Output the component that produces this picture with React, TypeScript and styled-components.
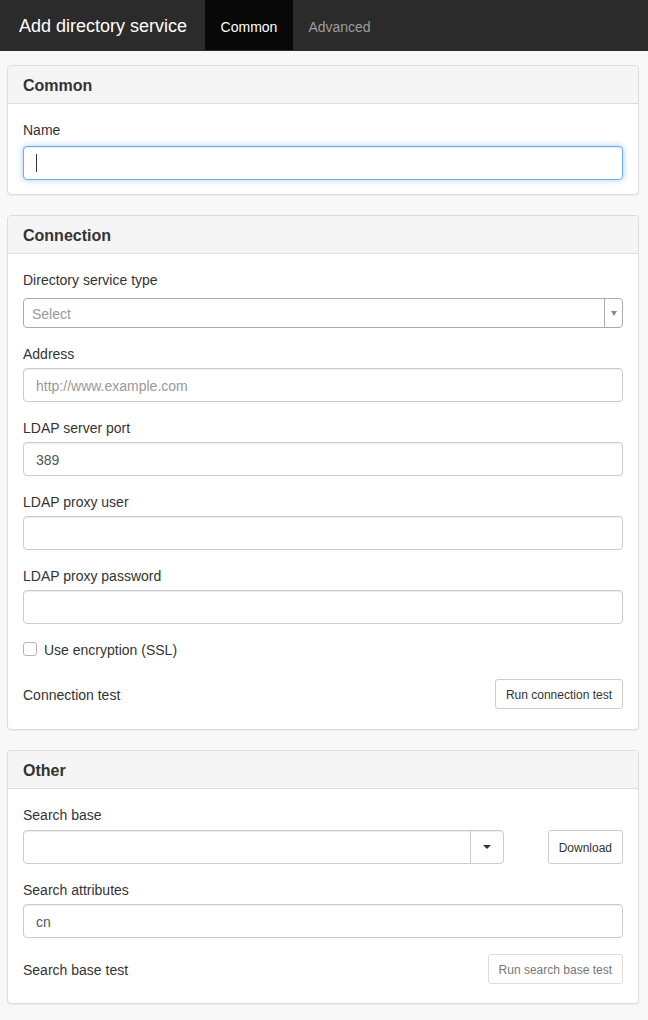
import styled, { createGlobalStyle } from 'styled-components';

const GlobalStyle = createGlobalStyle`
  * { box-sizing: border-box; }
  body {
    margin: 0;
    background: #f8f8f8;
    font-family: "Liberation Sans", Arial, sans-serif;
    font-size: 14px;
    color: #333;
  }
`;

const Navbar = styled.div`
  display: flex;
  align-items: flex-start;
  height: 51px;
  background: #2b2b2b;
`;

const Brand = styled.div`
  display: flex;
  align-items: center;
  height: 50px;
  padding: 3px 18px 0 19px;
  color: #fff;
  font-size: 18px;
`;

const Tab = styled.div<{ $active?: boolean }>`
  display: flex;
  align-items: center;
  height: 50px;
  padding: 3px 15.5px 0;
  font-size: 14px;
  color: ${(p) => (p.$active ? '#fff' : '#9d9d9d')};
  background: ${(p) => (p.$active ? '#080808' : 'transparent')};
`;

const Page = styled.div`
  padding: 14px 9px 16px 7px;
  display: flex;
  flex-direction: column;
  gap: 20px;
`;

const Panel = styled.div`
  background: #fff;
  border: 1px solid #ddd;
  border-radius: 4px;
  box-shadow: 0 1px 1px rgba(0, 0, 0, 0.05);
`;

const PanelHeading = styled.div`
  height: 38px;
  display: flex;
  align-items: center;
  padding: 2px 15px 0;
  background: #f5f5f5;
  border-bottom: 1px solid #ddd;
  border-radius: 3px 3px 0 0;
  font-size: 16px;
  font-weight: bold;
  color: #333;
`;

const PanelBody = styled.div<{ $bottom?: number }>`
  padding: 15px 15px ${(p) => p.$bottom ?? 15}px;
  display: flex;
  flex-direction: column;
`;

const FormGroup = styled.div<{ $gap?: number }>`
  display: flex;
  flex-direction: column;
  margin-bottom: ${(p) => p.$gap ?? 15}px;
`;

const Label = styled.label<{ $mb?: number }>`
  line-height: 20px;
  padding-top: 1px;
  margin-bottom: ${(p) => (p.$mb ?? 5) - 1}px;
  color: #333;
`;

const Input = styled.input<{ $focus?: boolean }>`
  height: 34px;
  width: 100%;
  padding: 7px 12px 5px;
  font-family: inherit;
  font-size: 14px;
  color: #555;
  border: 1px solid ${(p) => (p.$focus ? '#66afe9' : '#ccc')};
  border-radius: 4px;
  box-shadow: ${(p) =>
    p.$focus
      ? 'inset 0 1px 1px rgba(0,0,0,.075), 0 0 6px rgba(102,175,233,.6)'
      : 'inset 0 1px 1px rgba(0,0,0,.075)'};
  outline: none;
  &::placeholder { color: #999; }
`;

const SelectBox = styled.div`
  height: 30px;
  display: flex;
  border: 1px solid #aaa;
  border-radius: 4px;
  background: #fff;
`;

const SelectText = styled.div`
  flex: 1;
  display: flex;
  align-items: center;
  padding: 2px 8px 0;
  color: #999;
`;

const SelectArrow = styled.div`
  width: 18px;
  border-left: 1px solid #aaa;
  display: flex;
  align-items: center;
  justify-content: center;
  &::after {
    content: '';
    border-left: 3px solid transparent;
    border-right: 3px solid transparent;
    border-top: 5px solid #888;
  }
`;

const Combo = styled.div`
  flex: 1;
  display: flex;
  height: 34px;
  border: 1px solid #ccc;
  border-radius: 4px;
  box-shadow: inset 0 1px 1px rgba(0,0,0,.075);
`;

const ComboField = styled.div`
  flex: 1;
`;

const ComboCaret = styled.div`
  width: 33px;
  border-left: 1px solid #ccc;
  display: flex;
  align-items: center;
  justify-content: center;
  &::after {
    content: '';
    border-left: 4px solid transparent;
    border-right: 4px solid transparent;
    border-top: 4px solid #333;
  }
`;

const InlineRow = styled.div`
  display: flex;
  align-items: center;
  gap: 44px;
`;

const CheckRow = styled.label`
  display: flex;
  align-items: center;
  gap: 7px;
  height: 20px;
  margin-bottom: 20px;
`;

const CheckBox = styled.span`
  width: 14px;
  height: 14px;
  border: 1px solid #b5b5b5;
  border-radius: 3px;
  background: #fff;
`;

const ActionRow = styled.div`
  display: flex;
  align-items: center;
  justify-content: space-between;
`;

const RowText = styled.span`
  padding-top: 2px;
`;

const Button = styled.button<{ $size?: 'sm' | 'md'; $disabled?: boolean }>`
  height: ${(p) => (p.$size === 'sm' ? 30 : 34)}px;
  padding: 2px 10px 0;
  font-family: inherit;
  font-size: 12px;
  color: ${(p) => (p.$disabled ? '#777' : '#333')};
  background: #fff;
  border: 1px solid ${(p) => (p.$disabled ? '#ddd' : '#ccc')};
  border-radius: 3px;
`;

const FocusWrap = styled.div`
  position: relative;
`;

const Cursor = styled.span`
  position: absolute;
  left: 13px;
  top: 8px;
  width: 1px;
  height: 18px;
  background: #333;
`;

export default function App() {
  return (
    <>
      <GlobalStyle />
      <Navbar>
        <Brand>Add directory service</Brand>
        <Tab $active>Common</Tab>
        <Tab>Advanced</Tab>
      </Navbar>
      <Page>
        <Panel>
          <PanelHeading>Common</PanelHeading>
          <PanelBody $bottom={14}>
            <FormGroup $gap={0}>
              <Label $mb={7}>Name</Label>
              <FocusWrap>
                <Input $focus />
                <Cursor />
              </FocusWrap>
            </FormGroup>
          </PanelBody>
        </Panel>

        <Panel>
          <PanelHeading>Connection</PanelHeading>
          <PanelBody $bottom={20}>
            <FormGroup>
              <Label $mb={9}>Directory service type</Label>
              <SelectBox>
                <SelectText>Select</SelectText>
                <SelectArrow />
              </SelectBox>
            </FormGroup>
            <FormGroup>
              <Label>Address</Label>
              <Input placeholder="http://www.example.com" />
            </FormGroup>
            <FormGroup>
              <Label>LDAP server port</Label>
              <Input defaultValue="389" />
            </FormGroup>
            <FormGroup>
              <Label>LDAP proxy user</Label>
              <Input />
            </FormGroup>
            <FormGroup>
              <Label>LDAP proxy password</Label>
              <Input type="password" />
            </FormGroup>
            <CheckRow>
              <CheckBox />
              <RowText>Use encryption (SSL)</RowText>
            </CheckRow>
            <ActionRow>
              <RowText>Connection test</RowText>
              <Button $size="sm">Run connection test</Button>
            </ActionRow>
          </PanelBody>
        </Panel>

        <Panel>
          <PanelHeading>Other</PanelHeading>
          <PanelBody $bottom={19}>
            <FormGroup>
              <Label $mb={6}>Search base</Label>
              <InlineRow>
                <Combo>
                  <ComboField />
                  <ComboCaret />
                </Combo>
                <Button>Download</Button>
              </InlineRow>
            </FormGroup>
            <FormGroup $gap={16}>
              <Label>Search attributes</Label>
              <Input defaultValue="cn" />
            </FormGroup>
            <ActionRow>
              <RowText>Search base test</RowText>
              <Button $size="sm" $disabled>Run search base test</Button>
            </ActionRow>
          </PanelBody>
        </Panel>
      </Page>
    </>
  );
}
